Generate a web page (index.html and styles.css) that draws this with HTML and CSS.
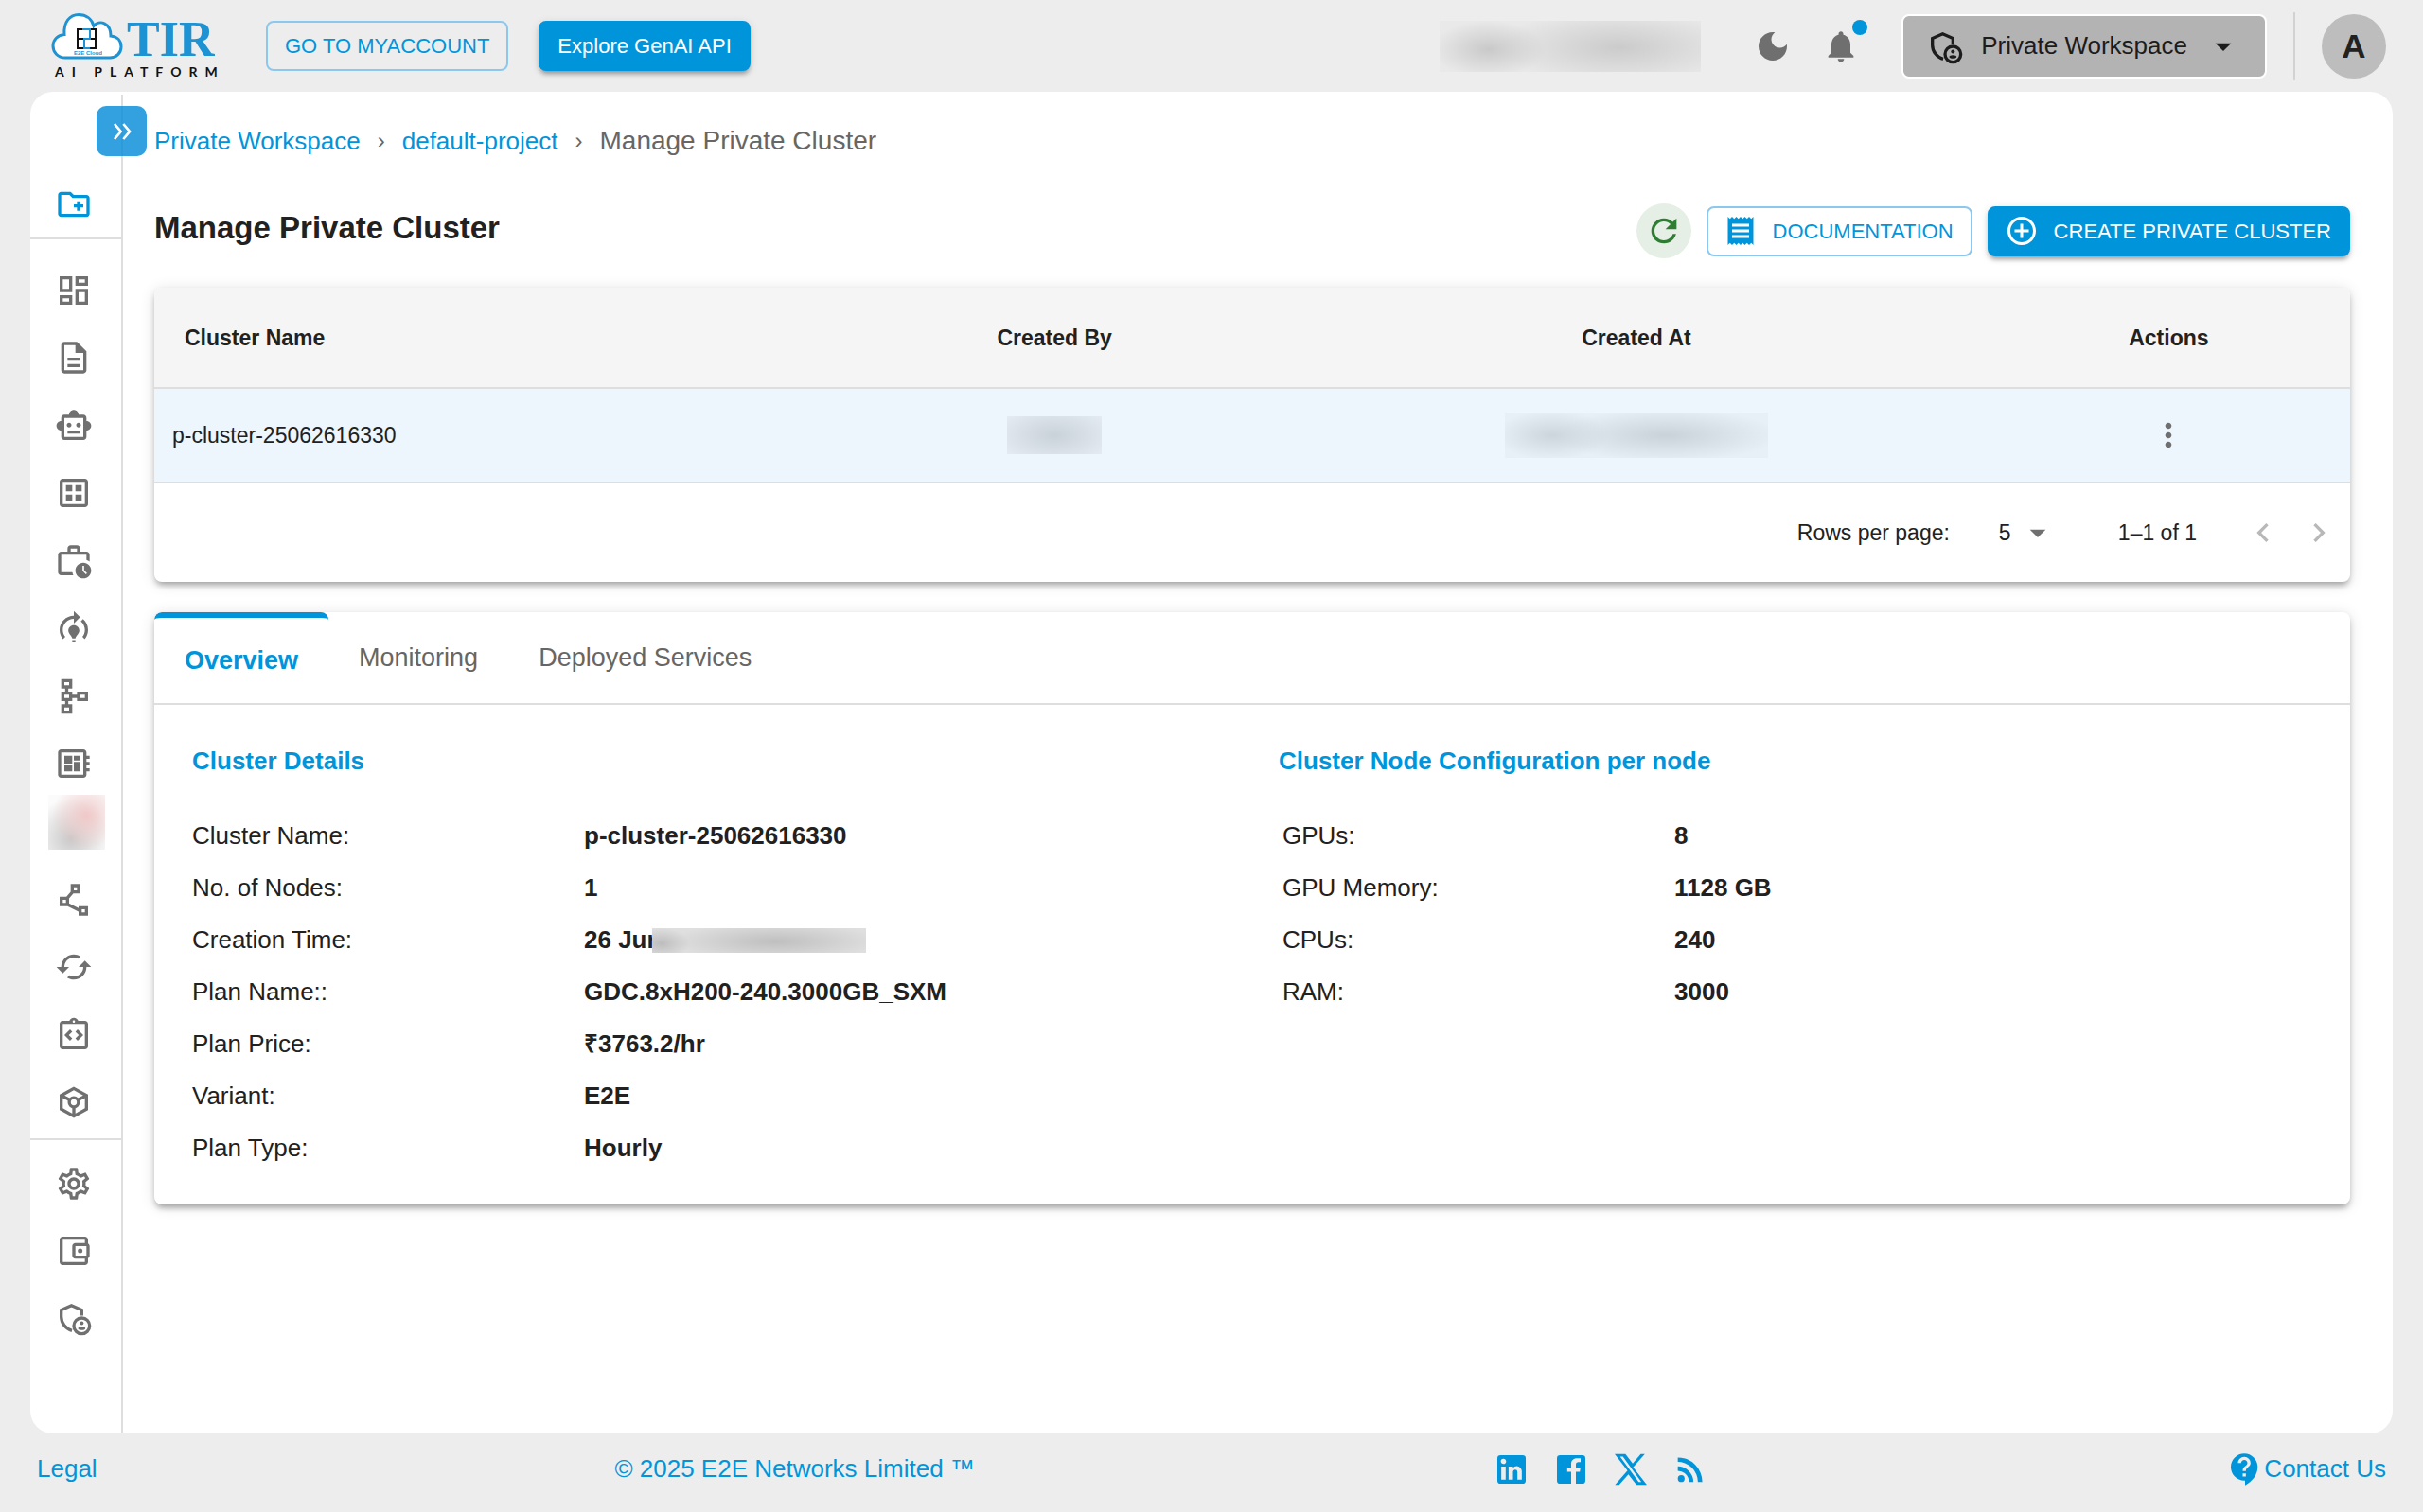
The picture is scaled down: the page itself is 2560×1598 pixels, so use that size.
FILE: index.html
```html
<!DOCTYPE html>
<html lang="en">
<head>
    <meta charset="UTF-8">
    <meta name="viewport" content="width=device-width, initial-scale=1.0">
    <title>Manage Private Cluster</title>
    <link rel="stylesheet" href="styles.css">
</head>
<body>
    <header class="topbar">
        <a href="#" class="logo" aria-label="TIR AI Platform">
            <svg viewBox="0 0 180 72" width="180" height="72">
                <path d="M15 48C7 48 2 42 2 35.500C2 29 7 24 14 23.500C13 10 20 2.500 29 2.500C37 2.500 43 7 45 14.500C51 7.500 63 11 63 25C70 25.500 74 30 74 36.500C74 43 69 48 62 48Z" fill="#fff" stroke="#1e93d4" stroke-width="3"/>
                <path d="M36 18h-8v20h8M39 18h8v20h-8M28 28h19" fill="none" stroke="#111" stroke-width="2"/>
                <path d="M33 18h8v10h-6v10h6" fill="none" stroke="#1e93d4" stroke-width="2"/>
                <text x="24" y="45" class="logo-small">E2E Cloud</text>
                <text x="80" y="46" class="logo-name">TIR</text>
                <text x="4" y="68" class="logo-caption">AI PLATFORM</text>
            </svg>
        </a>
        <a href="#" class="btn btn-outlined">GO TO MYACCOUNT</a>
        <a href="#" class="btn btn-filled">Explore GenAI API</a>

        <div class="topbar-right">
            <span class="redacted redacted-usage"></span>
            <button type="button" class="icon-btn" aria-label="Dark mode">
                <svg class="icon" viewBox="0 0 24 24"><path d="M12 3c-4.970 0-9 4.030-9 9s4.030 9 9 9 9-4.030 9-9c0-.46-.04-.92-.1-1.360-.98 1.370-2.580 2.260-4.400 2.260-2.980 0-5.400-2.420-5.400-5.400 0-1.810.89-3.420 2.260-4.400-.44-.06-.9-.1-1.360-.1z"/></svg>
            </button>
            <button type="button" class="icon-btn bell" aria-label="Notifications">
                <svg class="icon" viewBox="0 0 24 24"><path d="M12 22c1.100 0 2-.9 2-2h-4c0 1.100.89 2 2 2zm6-6v-5c0-3.070-1.640-5.640-4.500-6.320V4c0-.83-.67-1.500-1.500-1.500s-1.500.67-1.500 1.500v.68C7.630 5.360 6 7.920 6 11v5l-2 2v1h16v-1l-2-2z"/></svg>
                <span class="bell-dot"></span>
            </button>
            <button type="button" class="workspace">
                <svg class="icon" viewBox="0 0 24 24"><path class="line" d="M17 10.500V6.900L10.500 4.100 4 6.900v4.300c0 4 2.800 7.700 6.800 8.800"/><circle class="line" cx="17" cy="17" r="5"/><circle cx="17" cy="15.300" r="1.200"/><ellipse cx="17" cy="18.600" rx="2.300" ry="1.100"/></svg>
                <span>Private Workspace</span>
                <svg class="icon" viewBox="0 0 24 24"><path d="m7 10 5 5 5-5z"/></svg>
            </button>
            <span class="topbar-divider"></span>
            <button type="button" class="avatar">A</button>
        </div>
    </header>

    <div class="panel">
        <nav class="sidebar" aria-label="Main">
            <button type="button" class="sidebar-toggle" aria-label="Expand menu">
                <svg viewBox="0 0 24 24" width="32" height="32"><path d="m6 6 5 6-5 6M13 6l5 6-5 6"/></svg>
            </button>
            <div class="nav-top">
                <a href="#" aria-label="New project"><svg class="icon" viewBox="0 0 24 24"><path d="M20 6h-8l-2-2H4c-1.110 0-1.990.89-1.990 2L2 18c0 1.110.89 2 2 2h16c1.110 0 2-.89 2-2V8c0-1.110-.89-2-2-2zm0 12H4V6h5.170l2 2H20v10zm-8-4h2v2h2v-2h2v-2h-2v-2h-2v2h-2v2z"/></svg></a>
            </div>
            <div class="nav-main">
                <a href="#" aria-label="Dashboard"><svg class="icon" viewBox="0 0 24 24"><path d="M19 5v2h-4V5h4M9 5v6H5V5h4m10 8v6h-4v-6h4M9 17v2H5v-2h4M21 3h-8v6h8V3zM11 3H3v10h8V3zm10 8h-8v10h8V11zm-10 4H3v6h8v-6z"/></svg></a>
                <a href="#" aria-label="Notebooks"><svg class="icon" viewBox="0 0 24 24"><path d="M8 16h8v2H8zm0-4h8v2H8zm6-10H6c-1.100 0-2 .9-2 2v16c0 1.100.89 2 1.990 2H18c1.100 0 2-.9 2-2V8l-6-6zm4 18H6V4h7v5h5v11z"/></svg></a>
                <a href="#" aria-label="GenAI"><svg class="icon" viewBox="0 0 24 24"><path d="M20 9V7c0-1.100-.9-2-2-2h-3c0-1.660-1.340-3-3-3S9 3.340 9 5H6c-1.100 0-2 .9-2 2v2c-1.660 0-3 1.340-3 3s1.340 3 3 3v4c0 1.100.9 2 2 2h12c1.100 0 2-.9 2-2v-4c1.660 0 3-1.340 3-3s-1.340-3-3-3zm-2 10H6V7h12v12zm-9-6c-.83 0-1.500-.67-1.500-1.500S8.170 10 9 10s1.500.67 1.500 1.500S9.830 13 9 13zm7.500-1.500c0 .83-.67 1.500-1.500 1.500s-1.500-.67-1.500-1.500.67-1.500 1.500-1.500 1.500.67 1.500 1.500zM8 15h8v2H8v-2z"/></svg></a>
                <a href="#" aria-label="Datasets"><svg class="icon" viewBox="0 0 24 24"><path d="M19 3H5c-1.100 0-2 .9-2 2v14c0 1.100.9 2 2 2h14c1.100 0 2-.9 2-2V5c0-1.100-.9-2-2-2zm0 16H5V5h14v14zM11 7H7v4h4V7zm6 0h-4v4h4V7zm-6 6H7v4h4v-4zm6 0h-4v4h4v-4z"/></svg></a>
                <a href="#" aria-label="Jobs"><svg class="icon" viewBox="0 0 24 24"><path d="M4 19V8h16v3.290c.72.22 1.400.54 2 .97V8c0-1.110-.89-2-2-2h-4V4c0-1.110-.89-2-2-2h-4c-1.110 0-2 .89-2 2v2H4c-1.110 0-1.990.89-1.990 2L2 19c0 1.110.89 2 2 2h7.680c-.3-.62-.5-1.290-.6-2H4zm6-15h4v2h-4V4z"/><path d="M18 13c-2.760 0-5 2.240-5 5s2.240 5 5 5 5-2.240 5-5-2.240-5-5-5zm1.650 7.350L17.500 18.200V15h1v2.790l1.850 1.850-.7.71z"/></svg></a>
                <a href="#" aria-label="Training"><svg class="icon" viewBox="0 0 24 24"><path d="M15.500 13.500c0 2-2.500 3.500-2.500 5h-2c0-1.500-2.500-3-2.500-5 0-1.930 1.570-3.500 3.500-3.500s3.500 1.570 3.500 3.500zm-2.500 6h-2V21h2v-1.500zm6-6.500c0 1.680-.59 3.210-1.580 4.420l1.420 1.420C20.180 17.270 21 15.230 21 13c0-2.740-1.230-5.190-3.160-6.840l-1.420 1.420C17.990 8.860 19 10.820 19 13zm-3-8-4-4v3c-4.970 0-9 4.030-9 9 0 2.230.82 4.270 2.160 5.840l1.420-1.420C5.590 16.210 5 14.680 5 13c0-3.860 3.140-7 7-7v3l4-4z"/></svg></a>
                <a href="#" aria-label="Pipelines"><svg class="icon" viewBox="0 0 24 24"><path d="M14 9v2h-3V9H8.500V7H11V1H4v6h2.500v2H4v6h2.500v2H4v6h7v-6H8.500v-2H11v-2h3v2h7V9h-7zM6 3h3v2H6V3zm3 18H6v-2h3v2zm0-8H6v-2h3v2zm10 0h-3v-2h3v2z"/></svg></a>
                <a href="#" aria-label="Private cluster"><svg class="icon" viewBox="0 0 24 24"><path d="M22 9V7h-2V5c0-1.100-.9-2-2-2H4c-1.100 0-2 .9-2 2v14c0 1.100.9 2 2 2h14c1.100 0 2-.9 2-2v-2h2v-2h-2v-2h2v-2h-2V9h2zm-4 10H4V5h14v14zM6 13h5v4H6zm6-6h4v3h-4zM6 7h5v5H6zm6 4h4v6h-4z"/></svg></a>
                <a href="#" aria-label="Hidden item"><span class="redacted redacted-nav"></span></a>
                <a href="#" aria-label="Vector database"><svg class="icon" viewBox="0 0 24 24"><path d="M15 16v1.260l-6-3v-3.170L11.700 8H16V2h-6v4.900L7.300 10H3v6h5l7 3.500V22h6v-6h-6zM12 4h2v2h-2V4zM7 14H5v-2h2v2zm12 6h-2v-2h2v2z"/></svg></a>
                <a href="#" aria-label="Sync"><svg class="icon" viewBox="0 0 24 24"><path d="m19 8-4 4h3c0 3.310-2.690 6-6 6-1.010 0-1.970-.25-2.800-.7l-1.460 1.460C8.970 19.540 10.430 20 12 20c4.420 0 8-3.580 8-8h3l-4-4zM6 12c0-3.310 2.690-6 6-6 1.010 0 1.970.25 2.800.7l1.460-1.460C15.030 4.460 13.570 4 12 4c-4.420 0-8 3.580-8 8H1l4 4 4-4H6z"/></svg></a>
                <a href="#" aria-label="Integrations"><svg class="icon" viewBox="0 0 24 24"><path d="M11 14.170 8.830 12 11 9.830 9.590 8.410 6 12l3.590 3.590zm3.410 1.420L18 12l-3.590-3.590L13 9.830 15.170 12 13 14.170z"/><path d="M19 3h-4.180C14.400 1.840 13.300 1 12 1s-2.400.84-2.820 2H5c-.14 0-.27.01-.4.04-.39.08-.74.28-1.010.55-.18.18-.33.4-.43.64-.1.23-.16.49-.16.77v14c0 1.100.9 2 2 2h14c1.100 0 2-.9 2-2V5c0-1.100-.9-2-2-2zm-7-.25c.41 0 .75.34.75.75s-.34.75-.75.75-.75-.34-.75-.75.34-.75.75-.75zM19 19H5V5h14v14z"/></svg></a>
                <a href="#" aria-label="Containers"><svg class="icon" viewBox="0 0 24 24"><path class="line" d="M12 3.200 20 7.700v8.600l-8 4.500-8-4.500V7.700zM4.500 8l5 2.500M19.500 8l-5 2.500M12 15v5.500"/><circle class="line" cx="12" cy="12" r="2.900"/></svg></a>
            </div>
            <div class="nav-bottom">
                <a href="#" aria-label="Settings"><svg class="icon" viewBox="0 0 24 24"><path d="M19.430 12.980c.04-.32.07-.64.07-.98 0-.34-.03-.66-.07-.98l2.110-1.650c.19-.15.24-.42.12-.64l-2-3.460c-.09-.16-.26-.25-.44-.25-.06 0-.12.01-.17.03l-2.490 1c-.52-.4-1.080-.73-1.690-.98l-.38-2.650C14.460 2.180 14.250 2 14 2h-4c-.25 0-.46.18-.49.42l-.38 2.650c-.61.25-1.170.59-1.690.98l-2.490-1c-.06-.02-.12-.03-.18-.03-.17 0-.34.09-.43.25l-2 3.460c-.13.22-.07.49.12.64l2.110 1.650c-.04.32-.07.65-.07.98 0 .33.03.66.07.98l-2.110 1.650c-.19.15-.24.42-.12.64l2 3.460c.09.16.26.25.44.25.06 0 .12-.01.17-.03l2.490-1c.52.4 1.080.73 1.690.98l.38 2.650c.03.24.24.42.49.42h4c.25 0 .46-.18.49-.42l.38-2.650c.61-.25 1.170-.59 1.690-.98l2.490 1c.06.02.12.03.18.03.17 0 .34-.09.43-.25l2-3.460c.12-.22.07-.49-.12-.64l-2.110-1.650zm-1.980-1.710c.04.31.05.52.05.73 0 .21-.02.43-.05.73l-.14 1.130.89.7 1.080.84-.7 1.210-1.270-.51-1.040-.42-.9.68c-.43.32-.84.56-1.250.73l-1.060.43-.16 1.130-.2 1.350h-1.400l-.19-1.350-.16-1.130-1.060-.43c-.43-.18-.83-.41-1.230-.71l-.91-.7-1.060.43-1.270.51-.7-1.210 1.080-.84.89-.7-.14-1.130c-.03-.31-.05-.54-.05-.74s.02-.43.05-.73l.14-1.130-.89-.7-1.080-.84.7-1.210 1.270.51 1.040.42.9-.68c.43-.32.84-.56 1.250-.73l1.060-.43.16-1.130.2-1.350h1.390l.19 1.350.16 1.130 1.060.43c.43.18.83.41 1.230.71l.91.7 1.060-.43 1.270-.51.7 1.210-1.070.85-.89.7.14 1.130zM12 8c-2.210 0-4 1.790-4 4s1.790 4 4 4 4-1.790 4-4-1.790-4-4-4zm0 6c-1.100 0-2-.9-2-2s.9-2 2-2 2 .9 2 2-.9 2-2 2z"/></svg></a>
                <a href="#" aria-label="Billing"><svg class="icon" viewBox="0 0 24 24"><path d="M21 7.280V5c0-1.100-.9-2-2-2H5c-1.110 0-2 .9-2 2v14c0 1.100.89 2 2 2h14c1.100 0 2-.9 2-2v-2.280c.59-.35 1-.98 1-1.720V9c0-.74-.41-1.380-1-1.720zM20 9v6h-7V9h7zM5 19V5h14v2h-6c-1.100 0-2 .9-2 2v6c0 1.100.9 2 2 2h6v2H5z"/><circle cx="16" cy="12" r="1.500"/></svg></a>
                <a href="#" aria-label="Access control"><svg class="icon" viewBox="0 0 24 24"><path class="line" d="M17 10.500V6.900L10.500 4.100 4 6.900v4.300c0 4 2.800 7.700 6.800 8.800"/><circle class="line" cx="17" cy="17" r="5"/><circle cx="17" cy="15.300" r="1.200"/><ellipse cx="17" cy="18.600" rx="2.300" ry="1.100"/></svg></a>
            </div>
        </nav>

        <main class="content">
            <nav class="breadcrumb" aria-label="Breadcrumb">
                <a href="#">Private Workspace</a>
                <span class="separator">›</span>
                <a href="#">default-project</a>
                <span class="separator">›</span>
                <span class="current">Manage Private Cluster</span>
            </nav>

            <div class="page-head">
                <h1>Manage Private Cluster</h1>
                <div class="page-actions">
                    <button type="button" class="refresh" aria-label="Refresh">
                        <svg class="icon" viewBox="0 0 24 24"><path d="M17.650 6.350C16.200 4.900 14.210 4 12 4c-4.420 0-7.990 3.580-7.990 8s3.570 8 7.990 8c3.730 0 6.840-2.550 7.730-6h-2.080c-.82 2.330-3.040 4-5.650 4-3.310 0-6-2.690-6-6s2.690-6 6-6c1.660 0 3.140.69 4.220 1.780L13 11h7V4l-2.350 2.350z"/></svg>
                    </button>
                    <a href="#" class="btn btn-outlined btn-icon">
                        <svg viewBox="0 0 24 24" width="36" height="36"><path d="M18 17H6v-2h12v2zm0-4H6v-2h12v2zm0-4H6V7h12v2zM3 22l1.500-1.500L6 22l1.500-1.500L9 22l1.500-1.500L12 22l1.500-1.500L15 22l1.500-1.500L18 22l1.500-1.500L21 22V2l-1.500 1.500L18 2l-1.500 1.500L15 2l-1.500 1.500L12 2l-1.500 1.500L9 2 7.500 3.500 6 2 4.500 3.500 3 2v20z"/></svg>
                        DOCUMENTATION
                    </a>
                    <button type="button" class="btn btn-filled btn-icon">
                        <svg viewBox="0 0 24 24" width="36" height="36"><path d="M13 7h-2v4H7v2h4v4h2v-4h4v-2h-4V7zm-1-5C6.480 2 2 6.480 2 12s4.480 10 10 10 10-4.480 10-10S17.520 2 12 2zm0 18c-4.410 0-8-3.590-8-8s3.590-8 8-8 8 3.590 8 8-3.590 8-8 8z"/></svg>
                        CREATE PRIVATE CLUSTER
                    </button>
                </div>
            </div>

            <section class="card">
                <table class="clusters">
                    <thead>
                        <tr>
                            <th class="col-name">Cluster Name</th>
                            <th class="col-by">Created By</th>
                            <th class="col-at">Created At</th>
                            <th class="col-actions">Actions</th>
                        </tr>
                    </thead>
                    <tbody>
                        <tr>
                            <td class="col-name">p-cluster-25062616330</td>
                            <td><span class="redacted redacted-by"></span></td>
                            <td><span class="redacted redacted-at"></span></td>
                            <td>
                                <button type="button" class="icon-btn" aria-label="Cluster actions">
                                    <svg class="icon" viewBox="0 0 24 24"><path d="M12 8c1.100 0 2-.9 2-2s-.9-2-2-2-2 .9-2 2 .9 2 2 2zm0 2c-1.100 0-2 .9-2 2s.9 2 2 2 2-.9 2-2-.9-2-2-2zm0 6c-1.100 0-2 .9-2 2s.9 2 2 2 2-.9 2-2-.9-2-2-2z"/></svg>
                                </button>
                            </td>
                        </tr>
                    </tbody>
                </table>
                <div class="pagination">
                    <label for="rows">Rows per page:</label>
                    <span class="select-wrap">
                        <select id="rows">
                            <option>5</option>
                            <option>10</option>
                            <option>25</option>
                        </select>
                        <svg class="icon" viewBox="0 0 24 24"><path d="m7 10 5 5 5-5z"/></svg>
                    </span>
                    <span class="range">1–1 of 1</span>
                    <button type="button" class="icon-btn" aria-label="Previous page" disabled>
                        <svg class="icon" viewBox="0 0 24 24"><path d="M15.410 7.410 14 6l-6 6 6 6 1.410-1.410L10.830 12z"/></svg>
                    </button>
                    <button type="button" class="icon-btn" aria-label="Next page" disabled>
                        <svg class="icon" viewBox="0 0 24 24"><path d="M10 6 8.590 7.410 13.170 12l-4.580 4.590L10 18l6-6z"/></svg>
                    </button>
                </div>
            </section>

            <section class="card">
                <div class="tabs" role="tablist">
                    <button type="button" class="tab active" role="tab" aria-selected="true">Overview</button>
                    <button type="button" class="tab" role="tab">Monitoring</button>
                    <button type="button" class="tab" role="tab">Deployed Services</button>
                </div>
                <div class="details">
                    <div class="details-col">
                        <h2>Cluster Details</h2>
                        <dl>
                            <dt>Cluster Name:</dt><dd>p-cluster-25062616330</dd>
                            <dt>No. of Nodes:</dt><dd>1</dd>
                            <dt>Creation Time:</dt><dd>26 Jun<span class="redacted redacted-time"></span></dd>
                            <dt>Plan Name::</dt><dd>GDC.8xH200-240.3000GB_SXM</dd>
                            <dt>Plan Price:</dt><dd>₹3763.2/hr</dd>
                            <dt>Variant:</dt><dd>E2E</dd>
                            <dt>Plan Type:</dt><dd>Hourly</dd>
                        </dl>
                    </div>
                    <div class="details-col">
                        <h2>Cluster Node Configuration per node</h2>
                        <dl class="node-config">
                            <dt>GPUs:</dt><dd>8</dd>
                            <dt>GPU Memory:</dt><dd>1128 GB</dd>
                            <dt>CPUs:</dt><dd>240</dd>
                            <dt>RAM:</dt><dd>3000</dd>
                        </dl>
                    </div>
                </div>
            </section>
        </main>
    </div>

    <footer class="footer">
        <a href="#">Legal</a>
        <a href="#">© 2025 E2E Networks Limited ™</a>
        <div class="social">
            <a href="#" aria-label="LinkedIn"><svg class="icon" viewBox="0 0 24 24"><path d="M19 3a2 2 0 0 1 2 2v14a2 2 0 0 1-2 2H5a2 2 0 0 1-2-2V5a2 2 0 0 1 2-2h14m-.5 15.500v-5.300a3.260 3.260 0 0 0-3.260-3.260c-.85 0-1.840.52-2.320 1.300v-1.110h-2.790v8.370h2.790v-4.930c0-.77.62-1.400 1.390-1.400a1.400 1.400 0 0 1 1.400 1.400v4.930h2.790M6.880 8.560a1.680 1.680 0 0 0 1.680-1.680c0-.93-.75-1.690-1.680-1.690a1.690 1.690 0 0 0-1.690 1.690c0 .93.76 1.680 1.690 1.680m1.390 9.940v-8.370H5.500v8.370h2.770z"/></svg></a>
            <a href="#" aria-label="Facebook"><svg class="icon" viewBox="0 0 24 24"><path d="M5 3h14a2 2 0 0 1 2 2v14a2 2 0 0 1-2 2h-4v-7.500h2.500l.4-2.500H15V9c0-1.100.5-1.700 1.700-1.700H18V5h-2.200C13.300 5 12 6.400 12 8.700V11H9.500v2.500H12V21H5a2 2 0 0 1-2-2V5a2 2 0 0 1 2-2z"/></svg></a>
            <a href="#" aria-label="X"><svg class="icon" viewBox="0 0 24 24"><path d="M18.300 2.200h2.600l-7.400 8.500 8.700 11.100h-6.600l-5.100-6.600-5.900 6.600H2l7.900-9L1.800 2.200h6.800l4.600 6.100zM17 20h1.700L7 3.900H5.200z"/></svg></a>
            <a href="#" aria-label="RSS"><svg class="icon" viewBox="0 0 24 24"><path d="M6.180 15.640a2.180 2.180 0 1 1 0 4.360 2.180 2.180 0 1 1 0-4.360M4 4.440A15.560 15.560 0 0 1 19.560 20h-2.830A12.730 12.730 0 0 0 4 7.270V4.440m0 5.660a9.900 9.900 0 0 1 9.900 9.900h-2.830A7.070 7.070 0 0 0 4 12.930V10.100z"/></svg></a>
        </div>
        <a href="#" class="contact">
            <svg class="icon" viewBox="0 0 24 24"><path d="M11.500 2C6.810 2 3 5.810 3 10.500S6.810 19 11.500 19h.5v3c4.860-2.340 8-7 8-11.500C20 5.810 16.190 2 11.500 2zm1 14.500h-2v-2h2v2zm0-3.500h-2c0-3.250 3-3 3-5 0-1.100-.9-2-2-2s-2 .9-2 2h-2c0-2.210 1.790-4 4-4s4 1.790 4 4c0 2.500-3 2.750-3 5z"/></svg>
            Contact Us
        </a>
    </footer>
</body>
</html>
```
FILE: styles.css
```css
/* Base styles */
* {
    margin: 0;
    padding: 0;
    box-sizing: border-box;
}

body {
    display: flex;
    flex-direction: column;
    min-height: 100vh;
    font-family: "Liberation Sans", Helvetica, Arial, sans-serif;
    font-size: 26px;
    color: #212121;
    background-color: #ededed;
}

a {
    color: #0095db;
    text-decoration: none;
}

button,
select {
    font: inherit;
    color: inherit;
    background: none;
    border: none;
}

svg {
    display: block;
    flex-shrink: 0;
    fill: currentColor;
}

.icon {
    width: 40px;
    height: 40px;
}

.line {
    fill: none;
    stroke: currentColor;
    stroke-width: 2;
}

.icon-btn {
    position: relative;
    color: #6f6f6f;
}

/* Buttons */
.btn {
    display: flex;
    align-items: center;
    gap: 16px;
    padding: 6px 18px;
    border: 2px solid transparent;
    border-radius: 8px;
    font-size: 22px;
    line-height: 37px;
    white-space: nowrap;
}

.btn-outlined {
    color: #0095db;
    border-color: #8cc8ee;
}

.btn-filled {
    color: #fff;
    background-color: #0095db;
    border-color: #0095db;
    box-shadow: 0 6px 4px -4px rgba(0, 0, 0, .2), 0 4px 4px rgba(0, 0, 0, .14), 0 2px 10px rgba(0, 0, 0, .12);
}

.btn-icon {
    padding-left: 16px;
}

/* Top bar */
.topbar {
    display: flex;
    align-items: center;
    gap: 32px;
    height: 97px;
    padding: 0 39px 0 54px;
}

.logo {
    margin-right: 15px;
}

.logo-small {
    font-size: 6px;
    font-weight: bold;
    fill: #1e93d4;
}

.logo-name {
    font-family: "Liberation Serif", serif;
    font-size: 52px;
    font-weight: bold;
    fill: #1e93d4;
}

.logo-caption {
    font-family: Lato, sans-serif;
    font-size: 14px;
    font-weight: bold;
    letter-spacing: 8px;
    fill: #111;
}

.topbar-right {
    display: flex;
    align-items: center;
    margin-left: auto;
}

.topbar-right .icon-btn {
    margin-left: 32px;
}

.topbar-right .redacted + .icon-btn {
    margin-left: 56px;
}

.bell-dot {
    position: absolute;
    top: -8px;
    right: -8px;
    width: 16px;
    height: 16px;
    border-radius: 50%;
    background-color: #0095db;
}

.workspace {
    display: flex;
    align-items: center;
    gap: 18px;
    height: 68px;
    margin-left: 44px;
    padding: 0 24px;
    color: #1c1c1c;
    background-color: #b3b3b3;
    border: 2px solid #fff;
    border-radius: 8px;
    white-space: nowrap;
}

.topbar-divider {
    width: 2px;
    height: 72px;
    margin: 0 28px;
    background-color: #d2d2d2;
}

.avatar {
    width: 68px;
    height: 68px;
    border-radius: 50%;
    background-color: #bdbdbd;
    font-size: 35px;
    font-weight: bold;
}

/* White panel with side menu and page */
.panel {
    display: flex;
    flex: 1;
    margin: 0 32px;
    background-color: #fff;
    border-radius: 24px;
}

.sidebar {
    position: relative;
    display: flex;
    flex-direction: column;
    width: 98px;
    margin: 3px 0 1px;
    border-right: 2px solid #dedede;
}

.sidebar a {
    display: flex;
    align-items: center;
    justify-content: center;
    height: 71px;
    padding-right: 5px;
    color: #707070;
}

.nav-top {
    padding-top: 80px;
    border-bottom: 2px solid #dedede;
}

.nav-top a {
    color: #0095db;
}

.nav-main {
    display: flex;
    flex: 1;
    flex-direction: column;
    padding: 18px 0 2px;
    border-bottom: 2px solid #dedede;
}

.nav-main a {
    flex: 1;
    min-height: 0;
}

.nav-bottom {
    height: 309px;
    padding-top: 10px;
}

.sidebar-toggle {
    position: absolute;
    top: 12px;
    left: 70px;
    display: flex;
    align-items: center;
    justify-content: center;
    width: 53px;
    height: 53px;
    border-radius: 10px;
    background-color: rgba(0, 137, 215, .8);
}

.sidebar-toggle path {
    fill: none;
    stroke: #fff;
    stroke-width: 2;
}

.content {
    flex: 1;
    padding: 32px 45px 32px 33px;
}

/* Breadcrumb and title */
.breadcrumb {
    display: flex;
    align-items: center;
    line-height: 40px;
}

.separator {
    padding: 0 18px;
    font-size: 24px;
    color: #666;
}

.current {
    font-size: 28px;
    color: #666;
}

.page-head {
    display: flex;
    align-items: center;
    justify-content: space-between;
    margin: 46px 0 31px;
}

h1 {
    padding-bottom: 6px;
    font-size: 33px;
}

.page-actions {
    display: flex;
    align-items: center;
    gap: 16px;
}

.refresh {
    display: flex;
    align-items: center;
    justify-content: center;
    width: 58px;
    height: 58px;
    border-radius: 50%;
    color: #2e7d32;
    background-color: #e5efe5;
}

/* Cards */
.card {
    margin-bottom: 32px;
    background-color: #fff;
    border-radius: 8px;
    box-shadow: 0 6px 6px -4px rgba(0, 0, 0, .2), 0 4px 6px rgba(0, 0, 0, .16), 0 2px 16px rgba(0, 0, 0, .12);
    overflow: hidden;
}

/* Clusters table */
.clusters {
    width: 100%;
    table-layout: fixed;
    border-collapse: collapse;
    font-size: 23px;
    text-align: center;
}

.clusters th {
    height: 106px;
    padding-top: 2px;
    background-color: #f5f5f5;
    border-bottom: 2px solid #dedede;
}

.clusters td {
    height: 100px;
    background-color: #edf5fd;
    border-bottom: 2px solid #dedede;
}

.clusters .redacted,
.clusters .icon-btn {
    display: block;
    margin: 0 auto;
}

.clusters .col-name {
    width: 31%;
    text-align: left;
}

.clusters th.col-name {
    padding-left: 32px;
}

.clusters td.col-name {
    padding-left: 19px;
}

.clusters .col-by {
    width: 20%;
}

.clusters .col-at {
    width: 33%;
}

.clusters .col-actions {
    width: 16%;
    padding-right: 12px;
}

.clusters td:last-child {
    padding-right: 12px;
}

.pagination {
    display: flex;
    align-items: center;
    justify-content: flex-end;
    height: 104px;
    padding-right: 13px;
    font-size: 23px;
}

.select-wrap {
    position: relative;
    margin: 0 65px 0 48px;
}

.select-wrap .icon {
    position: absolute;
    top: 0;
    right: 0;
    color: #707070;
    pointer-events: none;
}

.select-wrap select {
    width: 65px;
    height: 40px;
    padding-left: 4px;
    appearance: none;
}

.range {
    margin-right: 50px;
}

.pagination .icon-btn {
    color: #b8b8b8;
}

.pagination .icon-btn + .icon-btn {
    margin-left: 19px;
}

/* Tabs */
.tabs {
    display: flex;
    border-bottom: 2px solid #dedede;
}

.tab {
    height: 96px;
    padding: 0 32px;
    font-size: 27px;
    color: #666;
}

.tab.active {
    font-weight: bold;
    color: #0095db;
    border-top: 6px solid #0095db;
    border-radius: 8px 8px 0 0;
}

/* Overview tab */
.details {
    display: grid;
    grid-template-columns: 1fr 1fr;
    gap: 16px;
    padding: 39px 0 32px 40px;
}

h2 {
    margin-bottom: 32px;
    font-size: 26px;
    line-height: 40px;
    color: #0095db;
}

dl {
    display: grid;
    grid-template-columns: 414px 1fr;
    line-height: 55px;
}

.node-config {
    padding-left: 4px;
}

dd {
    display: flex;
    align-items: center;
    font-weight: bold;
}

/* Hidden values */
.redacted {
    display: block;
}

.redacted-usage {
    width: 276px;
    height: 54px;
    background: radial-gradient(ellipse 60px 30px at 52px 30px, #c9c9c9, transparent),
        radial-gradient(ellipse 130px 40px at 190px 28px, #cbcbcb, transparent), #e9e9e9;
}

.redacted-nav {
    width: 60px;
    height: 58px;
    margin: 0 -6px 20px 0;
    background: radial-gradient(circle 36px at 40px 22px, #f0c8c8, transparent),
        radial-gradient(circle 42px at 24px 46px, #c8c8c8, transparent), #fbfbfb;
}

.redacted-by {
    width: 100px;
    height: 40px;
    background: radial-gradient(ellipse 62px 30px at center, #c9d1d9, transparent), #e3eaf2;
}

.redacted-at {
    width: 278px;
    height: 48px;
    background: radial-gradient(ellipse 60px 26px at 50px 24px, #ccd4dc, transparent),
        radial-gradient(ellipse 120px 28px at 170px 24px, #c9d1d9, transparent), #e7eff7;
}

.redacted-time {
    width: 226px;
    height: 26px;
    margin-left: -10px;
    background: radial-gradient(ellipse 30px 16px at 10px 16px, #bdbdbd, transparent),
        radial-gradient(ellipse 110px 20px at 130px 14px, #bfbfbf, transparent), #dfdfdf;
}

/* Footer */
.footer {
    display: flex;
    align-items: center;
    justify-content: space-between;
    height: 83px;
    padding: 0 39px 8px;
}

.social {
    display: flex;
    gap: 23px;
}

.contact {
    display: flex;
    align-items: center;
}
```
